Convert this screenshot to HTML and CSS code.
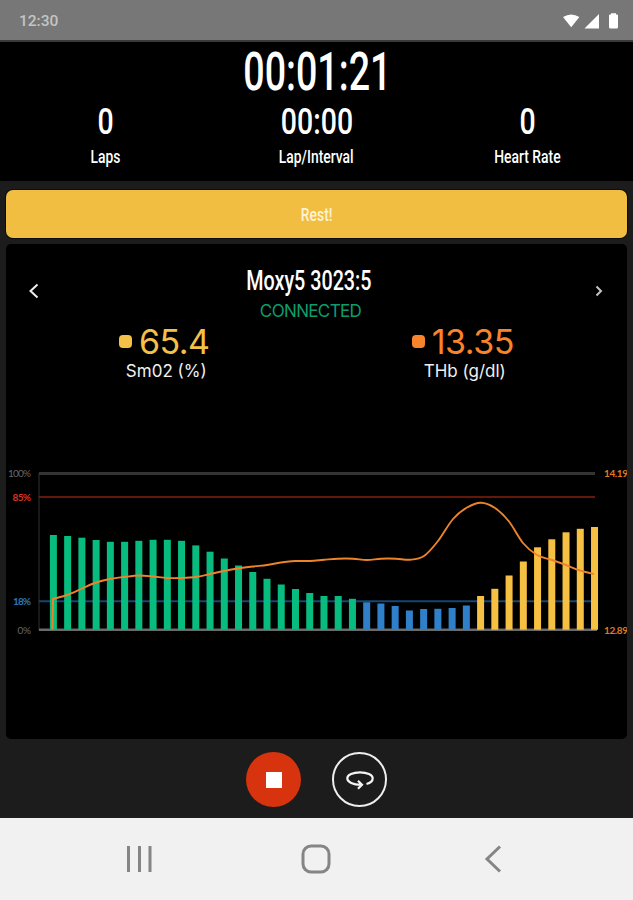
FILE: index.html
```html
<!DOCTYPE html>
<html lang="en">
<head>
<meta charset="utf-8">
<title>Workout</title>
<link rel="stylesheet" href="styles.css">
</head>
<body>
<header class="status">
  <span>12:30</span>
  <svg width="56" height="17" viewBox="0 0 56 17" fill="#fff">
    <path d="M0 4Q8.200-1.200 16.400 4L8.200 14.200Z"/>
    <path d="M36 1V15.500H21.500Z"/>
    <path d="M46 2.500Q46 1.500 47 1.500H48V.2H53V1.500H54Q55 1.500 55 2.500V14Q55 15.500 53.500 15.500H47.500Q46 15.500 46 14Z"/>
  </svg>
</header>
<section class="summary">
  <div class="timer"><span class="narrow">00:01:21</span></div>
  <div class="stats">
    <div class="stat"><b class="narrow">0</b><span class="narrow">Laps</span></div>
    <div class="stat"><b class="narrow">00:00</b><span class="narrow">Lap/Interval</span></div>
    <div class="stat"><b class="narrow">0</b><span class="narrow">Heart Rate</span></div>
  </div>
</section>
<main>
  <div class="rest"><span class="narrow">Rest!</span></div>
  <section class="card">
    <div class="sensor">
      <svg class="prev" width="12" height="16" viewBox="0 0 12 16"><path d="M9.500 1.500L2.500 8L9.500 14.500"/></svg>
      <div class="device"><span class="narrow">Moxy5 3023:5</span></div>
      <svg class="next" width="12" height="16" viewBox="0 0 12 16"><path d="M3.500 3.500L8 8L3.500 12.500"/></svg>
    </div>
    <div class="connected">CONNECTED</div>
    <div class="readings">
      <div class="reading sm"><div class="value"><i></i><span>65.4</span></div><div class="unit">Sm02 (%)</div></div>
      <div class="reading thb"><div class="value"><i></i><span>13.35</span></div><div class="unit">THb (g/dl)</div></div>
    </div>
    <svg class="chart" width="620" height="180" viewBox="7 460 620 180">
      <path d="M39 473V630" stroke="#191919" stroke-width="2"/>
      <path d="M39 473.500H595" stroke="#343434" stroke-width="3"/>
      <path d="M39 497H595" stroke="#85200f" stroke-width="1.600"/>
      <path d="M39 601.300H595" stroke="#164672" stroke-width="2"/>
      <path d="M39 629.800H597" stroke="#6b6b6b" stroke-width="2.600"/>
      <g id="bars"></g>
      <path id="trend" fill="none" stroke="#ed832b" stroke-width="1.900"/>
      <g class="axis">
        <text x="8" y="477.300" textLength="23" fill="#676767">100%</text>
        <text x="12.500" y="500.500" textLength="18.500" fill="#d83424" class="strong">85%</text>
        <text x="13" y="605.300" textLength="18" fill="#2a78bd" class="strong">18%</text>
        <text x="17.500" y="633.500" textLength="13.500" fill="#676767">0%</text>
        <text x="604" y="477.300" textLength="24" fill="#e27c22" class="strong">14.19</text>
        <text x="604" y="633.500" textLength="24" fill="#e27c22" class="strong">12.89</text>
      </g>
    </svg>
  </section>
  <div class="actions">
    <div class="stop"><i></i></div>
    <div class="lap">
      <svg width="30" height="24" viewBox="0 0 30 24" fill="none" stroke="#f4f4f4" stroke-width="2.200">
        <path d="M21.500 16C25.500 15 27.700 13 27.700 10.300C27.700 6.700 22 4.300 15 4.300S2.300 6.700 2.300 10.300C2.300 14.300 8 16.800 16 16.800M13 12.700L17 16.700L13 20.700"/>
      </svg>
    </div>
  </div>
</main>
<nav>
  <svg width="26" height="28" viewBox="0 0 26 28"><path d="M1.500 1V27M12.500 1V27M23 1V27" stroke-width="3"/></svg>
  <svg class="home" width="30" height="30" viewBox="0 0 30 30"><rect x="2" y="2" width="26" height="26" rx="8"/></svg>
  <svg width="18" height="28" viewBox="0 0 18 28"><path d="M16 1.500L3 14L16 26.500"/></svg>
</nav>
<script src="chart.js"></script>
</body>
</html>
```
FILE: styles.css
```css
* { box-sizing: border-box; }
body {
  margin: 0;
  width: 633px;
  height: 900px;
  overflow: hidden;
  display: flex;
  flex-direction: column;
  background: #1c1c1c;
  color: #fff;
  font-family: Roboto, sans-serif;
}
svg { display: block; flex: none; }
.narrow {
  display: inline-block;
  white-space: nowrap;
  transform: scaleX(.73);
}
.status {
  height: 42px;
  flex: none;
  display: flex;
  align-items: center;
  justify-content: space-between;
  padding: 2px 14px 0 19px;
  background: #777;
  border-bottom: 2px solid #3a3a3a;
  color: #c4c4c4;
  font-size: 15.5px;
  font-weight: 500;
}
.summary {
  height: 139px;
  flex: none;
  background: #000;
  text-align: center;
}
.timer {
  height: 60px;
  line-height: 60px;
  padding-left: 2px;
  font-size: 53px;
  font-weight: 500;
}
.timer .narrow { transform: scaleX(.71); }
.stats {
  display: grid;
  grid-template-columns: repeat(3, 1fr);
}
.stat {
  display: flex;
  flex-direction: column;
  align-items: center;
}
.stat b {
  height: 40px;
  line-height: 39px;
  font-size: 37px;
  font-weight: 500;
  transform: scaleX(.77);
}
.stat span {
  line-height: 30px;
  font-size: 19px;
  font-weight: 500;
}
main {
  height: 637px;
  flex: none;
  padding: 9px 6px 0;
}
.rest {
  height: 48px;
  border-radius: 7px;
  background: #f1be42;
  box-shadow: 0 0 0 1px #0c0c0c;
  text-align: center;
  line-height: 49px;
  font-size: 19px;
  font-weight: 500;
  color: #fff3d4;
}
.card {
  height: 495px;
  margin-top: 6px;
  border-radius: 5px;
  background: #000;
  overflow: hidden;
}
.sensor {
  height: 56px;
  padding: 17px 22px 0;
  display: flex;
  justify-content: space-between;
}
.sensor svg {
  margin-top: 22px;
  fill: none;
  stroke: #eee;
  stroke-width: 2;
}
.sensor .next { stroke: #c4c4c4; }
.device {
  margin-right: 16px;
  line-height: 40px;
  font-size: 28px;
  font-weight: 500;
}
.device .narrow { transform: scaleX(.705); }
.connected {
  padding-right: 12px;
  line-height: 22px;
  text-align: center;
  font-family: Inter, sans-serif;
  font-size: 17px;
  letter-spacing: -.65px;
  color: #0d9d6d;
}
.readings {
  display: grid;
  grid-template-columns: 1fr 1fr;
  padding: 0 13px 0 11px;
  font-family: Inter, sans-serif;
}
.reading {
  display: flex;
  flex-direction: column;
  align-items: center;
}
.value {
  display: flex;
  align-items: center;
  gap: 7px;
  height: 38px;
  margin-left: -4px;
  font-size: 34px;
  letter-spacing: -.5px;
}
.value i {
  width: 13px;
  height: 13px;
  border-radius: 4px;
  background: currentColor;
}
.sm .value { color: #f3c147; }
.thb .value { color: #f9842b; }
.unit {
  line-height: 23px;
  font-size: 17px;
  color: #f0f0f0;
}
.chart { margin: 77px 0 0 1px; }
.axis {
  font-family: Lato, sans-serif;
  font-size: 10px;
}
.strong { font-weight: 700; }
.actions {
  display: flex;
  justify-content: center;
  gap: 31px;
  padding-top: 13px;
}
.stop, .lap {
  width: 55px;
  height: 55px;
  border-radius: 50%;
  display: flex;
  align-items: center;
  justify-content: center;
}
.stop { background: #d6330e; }
.stop i {
  width: 16px;
  height: 16px;
  background: #fff;
}
.lap { border: 2px solid #eee; }
nav {
  height: 82px;
  flex: none;
  display: flex;
  align-items: center;
  justify-content: space-between;
  padding: 0 131px 0 127px;
  background: #f1f1f1;
}
nav svg {
  fill: none;
  stroke: #858585;
  stroke-width: 3;
}
.home { margin-right: 6px; }
```
FILE: chart.js
```js
const tops = [535, 536, 537.7, 540, 541.8, 541.8, 540.8, 539.8, 539.8, 540.8, 545.4, 551.7, 558.5,
  565.5, 572, 578.8, 584.5, 589, 593, 596, 596, 598.8, 602.3, 603.5, 606, 610.5, 609, 608.8, 608,
  605.5, 596, 588.8, 575.5, 561.5, 547.3, 539.3, 532.3, 528.8, 527];
const colors = i => i < 22 ? '#08bc80' : i < 30 ? '#2f80c9' : '#f6c143';
document.getElementById('bars').innerHTML = tops.map((y, i) =>
  `<rect x="${(49.9 + i * 14.24).toFixed(2)}" y="${y}" width="7" height="${(629.7 - y).toFixed(1)}" fill="${colors(i)}"/>`).join('');

const pts = [[53, 599], [67, 595], [82, 588.5], [96, 582.5], [110, 579], [124, 577], [139, 575.5],
  [153, 576.5], [167, 578], [181, 578], [196, 577], [210, 574], [224, 571], [238, 568.5], [253, 566.5],
  [267, 565], [281, 562.5], [295, 561], [310, 561], [324, 559.8], [338, 558.7], [353, 558.7],
  [367, 560], [381, 558.7], [396, 558.7], [410, 559.7], [424, 556], [438, 541], [453, 519],
  [467, 507.5], [481, 502.7], [495, 508], [509, 521.5], [523, 543], [537, 555], [552, 560],
  [566, 565], [580, 570.5], [594, 574]];
let d = 'M52.300 629.500L53 599';
for (let i = 0; i < pts.length - 1; i++) {
  const a = pts[i - 1] || pts[i], b = pts[i], c = pts[i + 1], e = pts[i + 2] || c;
  d += `C${b[0] + (c[0] - a[0]) / 6} ${b[1] + (c[1] - a[1]) / 6} ${c[0] - (e[0] - b[0]) / 6} ${c[1] - (e[1] - b[1]) / 6} ${c[0]} ${c[1]}`;
}
document.getElementById('trend').setAttribute('d', d);
```
